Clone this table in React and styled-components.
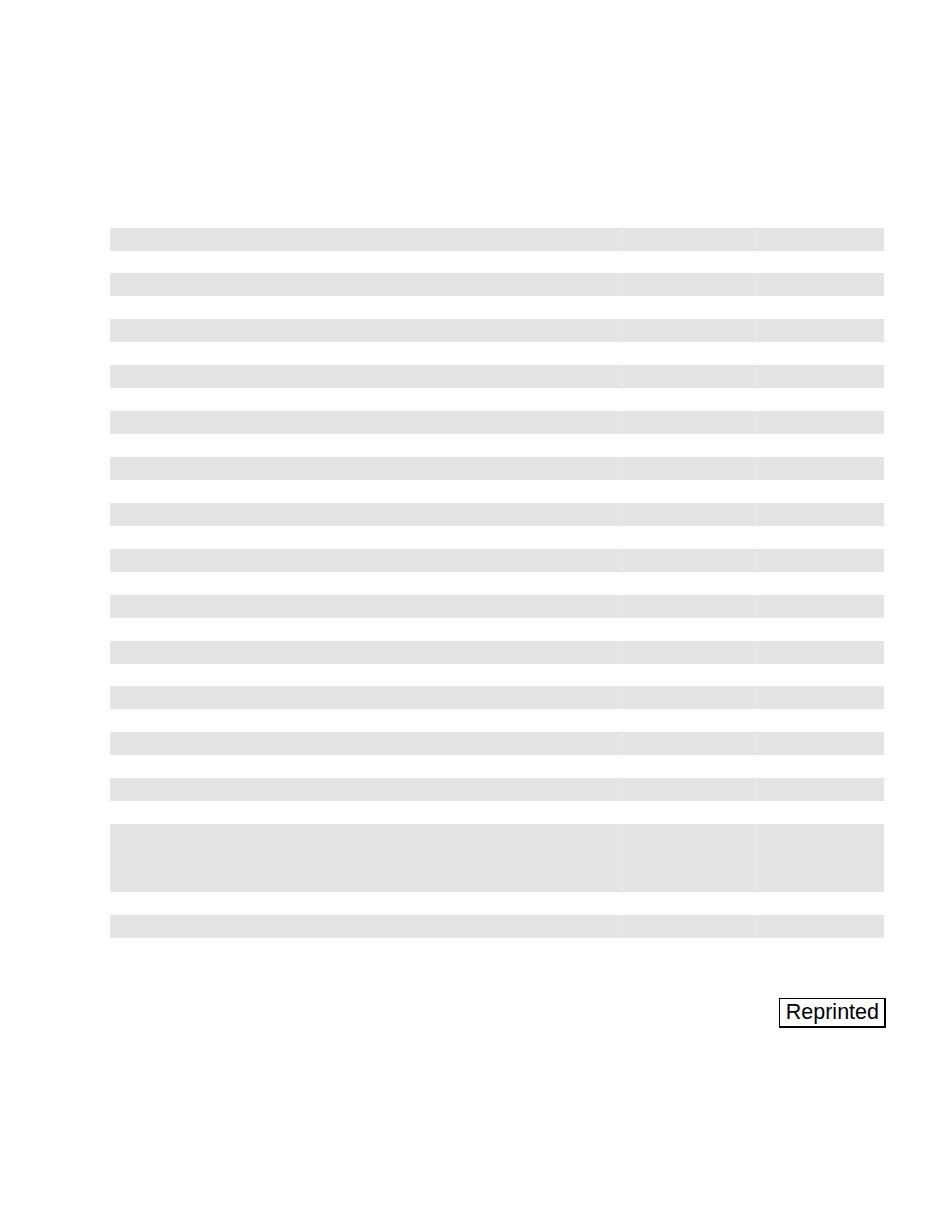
import React from 'react';
import styled, { createGlobalStyle } from 'styled-components';

const GlobalStyle = createGlobalStyle`
  html, body {
    margin: 0;
    padding: 0;
    background: #ffffff;
    font-family: "Liberation Sans", Arial, sans-serif;
  }
`;

const Page = styled.div`
  width: 935px;
  height: 1210px;
  box-sizing: border-box;
  padding: 227.5px 51px 0 110px;
  display: flex;
  flex-direction: column;
`;

const Table = styled.div`
  display: flex;
  flex-direction: column;
  gap: 22.9px;
`;

const Row = styled.div`
  display: grid;
  grid-template-columns: 512.5px 1px 132.5px 1px 127px;
  height: ${(p) => p.$height}px;
  background: #e4e4e4;
`;

const Cell = styled.div``;

const Divider = styled.div`
  background: #e9e9e9;
`;

const Footer = styled.div`
  display: flex;
  justify-content: flex-end;
  margin-top: 60px;
`;

const Stamp = styled.div`
  box-sizing: border-box;
  height: 30px;
  padding: 0 5px 0 6px;
  border: 1px solid #000;
  border-right-width: 2px;
  border-bottom-width: 2px;
  font-size: 21.5px;
  line-height: 27px;
  color: #000;
  margin-right: -2px;
`;

const rows = [
  23, 23, 23, 23, 23, 23, 23, 23, 23, 23, 23, 23, 23, 68, 23,
];

export default function App() {
  return (
    <>
      <GlobalStyle />
      <Page>
        <Table>
          {rows.map((h, i) => (
            <Row key={i} $height={h}>
              <Cell />
              <Divider />
              <Cell />
              <Divider />
              <Cell />
            </Row>
          ))}
        </Table>
        <Footer>
          <Stamp>Reprinted</Stamp>
        </Footer>
      </Page>
    </>
  );
}
